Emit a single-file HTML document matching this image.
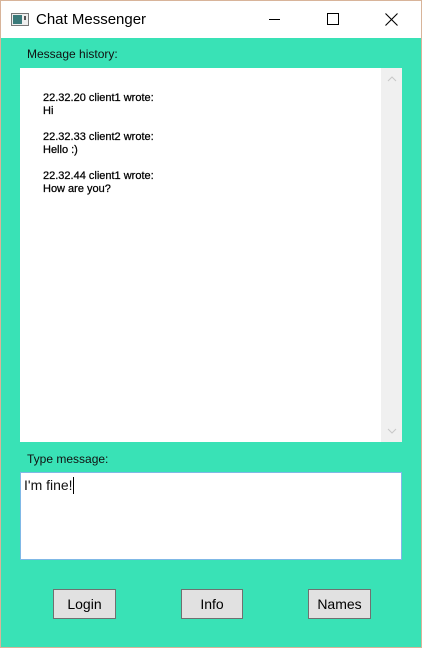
<!DOCTYPE html>
<html><head><style>
body{margin:0;width:422px;height:648px;overflow:hidden;font-family:"Segoe UI","Liberation Sans",sans-serif;}
.win{position:absolute;left:0;top:0;width:420px;height:646px;border:1px solid #d8b49a;background:#39e2b6;}
.title{position:absolute;left:0;top:0;width:420px;height:37px;background:#fff;}
.t{position:absolute;left:35px;top:10px;font-size:15px;color:#000;}
.abs{position:absolute;}
.lbl{position:absolute;font-size:12px;color:#111;}
.hist{position:absolute;left:19px;top:67px;width:382px;height:374px;background:#fff;}
.sb{position:absolute;right:0;top:0;width:21px;height:374px;background:#f0f0f0;}
.msg{position:absolute;left:23px;font-size:11px;line-height:13px;color:#000;font-family:"Liberation Sans",sans-serif;-webkit-text-stroke:0.25px #000;}
.inp{position:absolute;left:19px;top:471px;width:380px;height:86px;background:#fff;border:1px solid #7fb8e6;}
.btn{position:absolute;top:588px;height:30px;background:#e1e1e1;border:1px solid #707070;box-sizing:border-box;font-size:14px;text-align:center;line-height:29px;color:#000;}
</style></head><body>
<div class="win">
<div class="title">
<svg class="abs" style="left:10px;top:12px" width="18" height="14"><rect x="0.5" y="0.5" width="17" height="12" fill="#eee" stroke="#777"/><rect x="2" y="2" width="9" height="9" fill="#3a7a7a"/><rect x="13" y="3" width="2" height="4" fill="#555"/></svg>
<div class="t">Chat Messenger</div>
<div class="abs" style="left:268px;top:18px;width:11px;height:1px;background:#000"></div>
<div class="abs" style="left:326px;top:12px;width:10px;height:10px;border:1px solid #000"></div>
<svg class="abs" style="left:384px;top:12px" width="13" height="13"><path d="M0.5 0.5L12.5 12.5M12.5 0.5L0.5 12.5" stroke="#000" stroke-width="1.1"/></svg>
</div>
<div class="lbl" style="left:26px;top:46px">Message history:</div>
<div class="hist">
<div class="msg" style="top:24px">22.32.20 client1 wrote:<br>Hi</div>
<div class="msg" style="top:63px">22.32.33 client2 wrote:<br>Hello :)</div>
<div class="msg" style="top:102px">22.32.44 client1 wrote:<br>How are you?</div>
<div class="sb">
<svg class="abs" style="left:6px;top:8px" width="10" height="6"><path d="M1 5L5 1L9 5" stroke="#c8c8c8" fill="none"/></svg>
<svg class="abs" style="left:6px;top:360px" width="10" height="6"><path d="M1 1L5 5L9 1" stroke="#c8c8c8" fill="none"/></svg>
</div>
</div>
<div class="lbl" style="left:26px;top:451px">Type message:</div>
<div class="inp"><div class="abs" style="left:3px;top:4px;font-size:14px;color:#111">I'm fine!<span style="display:inline-block;width:1px;height:17px;background:#000;vertical-align:-4px"></span></div></div>
<div class="btn" style="left:52px;width:63px">Login</div>
<div class="btn" style="left:180px;width:62px">Info</div>
<div class="btn" style="left:307px;width:63px">Names</div>
</div>
</body></html>
